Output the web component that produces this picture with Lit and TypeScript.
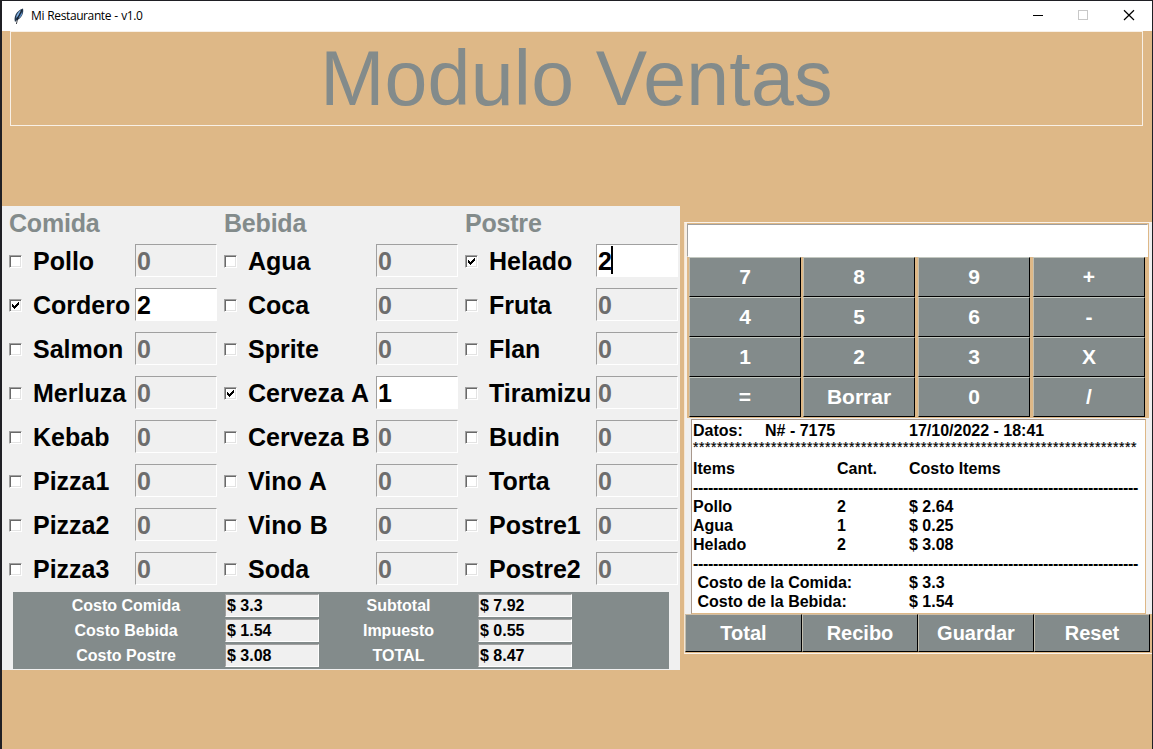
import { LitElement, html, css, svg } from "lit";
import { customElement, property } from "lit/decorators.js";
import { classMap } from "lit/directives/class-map.js";

interface Item { name: string; qty: string; on: boolean; caret?: boolean; }
const item = (name: string, qty = "0", on = false, caret = false): Item => ({ name, qty, on, caret });

const MENU: { title: string; items: Item[] }[] = [
  { title: "Comida", items: [item("Pollo"), item("Cordero", "2", true), item("Salmon"), item("Merluza"), item("Kebab"), item("Pizza1"), item("Pizza2"), item("Pizza3")] },
  { title: "Bebida", items: [item("Agua"), item("Coca"), item("Sprite"), item("Cerveza A", "1", true), item("Cerveza B"), item("Vino A"), item("Vino B"), item("Soda")] },
  { title: "Postre", items: [item("Helado", "2", true, true), item("Fruta"), item("Flan"), item("Tiramizu"), item("Budin"), item("Torta"), item("Postre1"), item("Postre2")] },
];
const COSTS = [
  ["Costo Comida", "$ 3.3", "Subtotal", "$ 7.92"],
  ["Costo Bebida", "$ 1.54", "Impuesto", "$ 0.55"],
  ["Costo Postre", "$ 3.08", "TOTAL", "$ 8.47"],
];
const KEYS = ["7", "8", "9", "+", "4", "5", "6", "-", "1", "2", "3", "X", "=", "Borrar", "0", "/"];
const ACTIONS = ["Total", "Recibo", "Guardar", "Reset"];

@customElement("menu-column")
export class MenuColumn extends LitElement {
  @property() heading = "";
  @property({ attribute: false }) items: Item[] = [];
  static styles = css`
    :host { display: block; font: bold 25px/32px "Liberation Sans", Arial, sans-serif; color: #000; white-space: nowrap; }
    .heading { height: 33px; line-height: 35px; color: #838b8b; letter-spacing: -0.2px; }
    .row { display: grid; grid-template-columns: 24px 1fr 82px; align-items: center; height: 44px; }
    .box { box-sizing: border-box; width: 13px; height: 13px; background: #fff; border: 1px solid; border-color: #a0a0a0 #fff #fff #a0a0a0; box-shadow: inset 1px 1px #696969, inset -1px -1px #e3e3e3; }
    .box svg { display: block; width: 11px; height: 11px; }
    .label { line-height: 44px; word-spacing: 1px; }
    .entry { box-sizing: border-box; height: 33px; margin-bottom: 2px; padding: 1px 0 0 1px; border: 1px solid; border-color: #a0a0a0 #fff #fff #a0a0a0; line-height: 32px; color: #6d6d6d; display: flex; align-items: center; }
    .entry.on { background: #fff; color: #000; }
    .caret { width: 2px; height: 28px; background: #000; margin: -1px 0 0 -1px; }
  `;
  render() {
    return html`<div class="heading">${this.heading}</div>
      ${this.items.map((i) => html`<div class="row">
        <span class="box">${i.on ? html`<svg viewBox="0 0 11 11" shape-rendering="crispEdges"><path d="M2 4h1v1h1v1h1v-1h1v-1h1v-1h1v-1h1v3h-1v1h-1v1h-1v1h-1v1h-1v-1h-1v-1h-1z" /></svg>` : ""}</span>
        <span class="label">${i.name}</span>
        <span class=${classMap({ entry: true, on: i.on })}>${i.qty}${i.caret ? html`<i class="caret"></i>` : ""}</span>
      </div>`)}`;
  }
}

@customElement("sales-receipt")
export class SalesReceipt extends LitElement {
  static styles = css`
    :host { display: block; box-sizing: border-box; height: 195px; overflow: hidden; background: #fff; color: #000; border: 1px solid #deb887; border-top-color: #a8988c; border-left-color: #a8988c; padding: 1px 0 0 1px; font: bold 16px/19px "Liberation Sans", Arial, sans-serif; }
    .line { display: grid; grid-template-columns: 72px 72px 72px 1fr; height: 19px; white-space: pre; }
    .wide { grid-column: span 2; }
    .stars { height: 19px; font-size: 14px; line-height: 14px; letter-spacing: 0.552px; font-weight: normal; -webkit-text-stroke: 0.2px #000; }
    .dashes { height: 19px; letter-spacing: -0.328px; }
  `;
  private row(a: string, b: string, c: string) {
    return html`<div class="line"><span class="wide">${a}</span><span>${b}</span><span>${c}</span></div>`;
  }
  render() {
    const dashes = html`<div class="dashes">${"-".repeat(89)}</div>`;
    return html`<div class="line"><span>Datos:</span><span class="wide">N# - 7175</span><span>17/10/2022 - 18:41</span></div>
      <div class="stars">${"*".repeat(74)}</div>
      ${this.row("Items", "Cant.", "Costo Items")}${dashes}
      ${this.row("Pollo", "2", "$ 2.64")}${this.row("Agua", "1", "$ 0.25")}${this.row("Helado", "2", "$ 3.08")}${dashes}
      ${this.row(" Costo de la Comida:", "", "$ 3.3")}${this.row(" Costo de la Bebida:", "", "$ 1.54")}`;
  }
}

@customElement("app-root")
export class AppRoot extends LitElement {
  static styles = css`
    :host { display: block; box-sizing: border-box; width: 1153px; height: 749px; padding: 1px 1px 0 2px; background: #1f1f24; overflow: hidden; font-family: "Liberation Sans", Arial, sans-serif; }
    .window { height: 748px; background: #deb887; }
    .titlebar { display: flex; align-items: center; height: 30px; background: #fff; color: #000; font: 12px/30px "Open Sans", "Noto Sans", sans-serif; }
    .feather { width: 16px; height: 18px; margin: 0 5px 0 8px; }
    .name { letter-spacing: -0.4px; word-spacing: 0.6px; flex: 1; }
    .controls { width: 135px; height: 30px; margin-right: 2px; }
    .banner { box-sizing: border-box; height: 95px; margin: 0 9px 0 8px; border: 1px solid #f8f0e6; text-align: center; font-size: 77px; letter-spacing: 0.25px; line-height: 93px; color: #838b8b; }
    .content { display: flex; align-items: flex-start; }
    .left { box-sizing: border-box; width: 678px; height: 464px; margin-top: 80px; background: #f0f0f0; }
    .menu { display: grid; grid-template-columns: 208px 234px 213px; column-gap: 7px; padding-left: 7px; height: 386px; }
    .costs { width: 656px; height: 77px; margin-left: 11px; background: #838b8b; display: grid; grid-auto-rows: 25px; align-content: start; padding-top: 1px; box-sizing: border-box; }
    .cost { display: grid; grid-template-columns: 212px 94px 159px 94px; height: 25px; align-items: center; font: bold 16px/23px "Liberation Sans", Arial, sans-serif; color: #fff; }
    .cost .label { text-align: center; }
    .first { padding-left: 14px; }
    .value { box-sizing: border-box; height: 23px; padding-left: 1px; background: #f0f0f0; color: #000; border: 1px solid; border-color: #a0a0a0 #fff #fff #a0a0a0; line-height: 21px; }
    .right { box-sizing: border-box; width: 468px; height: 432px; margin: 96px 0 0 4px; border-top: 1px solid #fbf3ea; border-bottom: 1px solid #fbf3ea; border-left: 1px solid #f5e6d4; }
    .pad { height: 195px; border-left: 2px solid #f8efe4; border-right: 3px solid #f0f0f0; padding-top: 1px; box-sizing: border-box; }
    .display { box-sizing: border-box; height: 33px; width: 461px; background: #fff; border: 1px solid; border-color: #a0a0a0 #fff #fff #a0a0a0; }
    .keys { display: grid; grid-template-columns: 114px 115px 115px 112px; grid-auto-rows: 40px; padding-left: 2px; }
    .btn { box-sizing: border-box; background: #838b8b; color: #fff; border: 1px solid; border-color: #c3c8c0 #000 #000 #c3bfb0; text-align: center; font: bold 21px/38px "Liberation Sans", Arial, sans-serif; }
    .keys .btn { width: 112px; }
    .paper { height: 196px; padding: 1px 6px 0 6px; background: #f0f0f0; box-sizing: border-box; }
    .actions { display: grid; grid-template-columns: 117px 116px 116px 116px; height: 38px; }
    .actions .btn { font-size: 20px; line-height: 36px; border-top-color: #cfbda4; }
  `;
  render() {
    return html`<div class="window">
      <div class="titlebar">
        <svg class="feather" viewBox="0 0 16 18">${svg`<path d="M5 15C3.5 10 6 4 13 1.5C14 6 12 11 6.5 13.5Z" fill="#24384f"/><path d="M6 11C6.5 7 8.5 4.5 11.5 3L8.5 9Z" fill="#83b3e6"/><path d="M8.5 11L12.5 4.5Q12.5 8 10 10.5Z" fill="#6497d0"/><path d="M11.7 3L8 10L6.4 17" stroke="#10151e" stroke-width="0.8" fill="none"/>`}</svg>
        <span class="name">Mi Restaurante - v1.0</span>
        <svg class="controls" viewBox="0 0 135 30" fill="none"><path d="M18 14.5H28" stroke="#000"/><rect x="63.5" y="9.5" width="9" height="9" stroke="#c8c8c8"/><path d="M109 9.2L119 19M119 9.2L109 19" stroke="#000" stroke-width="1.2"/></svg>
      </div>
      <div class="banner">Modulo Ventas</div>
      <div class="content">
        <div class="left">
          <div class="menu">${MENU.map((m) => html`<menu-column .heading=${m.title} .items=${m.items}></menu-column>`)}</div>
          <div class="costs">${COSTS.map((c) => html`<div class="cost"><span class="label first">${c[0]}</span><span class="value">${c[1]}</span><span class="label">${c[2]}</span><span class="value">${c[3]}</span></div>`)}</div>
        </div>
        <div class="right">
          <div class="pad"><div class="display"></div><div class="keys">${KEYS.map((k) => html`<div class="btn">${k}</div>`)}</div></div>
          <div class="paper"><sales-receipt></sales-receipt></div>
          <div class="actions">${ACTIONS.map((a) => html`<div class="btn">${a}</div>`)}</div>
        </div>
      </div>
    </div>`;
  }
}
